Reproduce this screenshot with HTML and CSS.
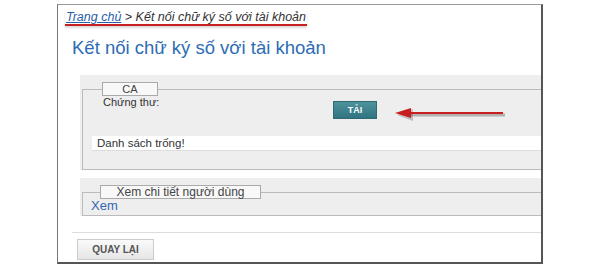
FILE: index.html
```html
<!DOCTYPE html>
<html lang="vi">
<head>
    <meta charset="UTF-8">
    <title>Kết nối chữ ký số với tài khoản</title>
    <link rel="stylesheet" href="styles.css">
</head>
<body>
    <div class="frame">
        <div class="breadcrumb">
            <span class="crumbs"><a href="#">Trang chủ</a> &gt; Kết nối chữ ký số với tài khoản</span>
        </div>
        <h1 class="title">Kết nối chữ ký số với tài khoản</h1>

        <div class="panel">
            <fieldset>
                <legend class="legend-ca"><span>CA</span></legend>
                <div class="cert-row">
                    <span class="cert-label">Chứng thư:</span>
                    <button class="btn-load">TẢI</button>
                </div>
                <div class="empty-row">Danh sách trống!</div>
            </fieldset>
        </div>

        <div class="panel panel-second">
            <fieldset>
                <legend class="legend-user"><span>Xem chi tiết người dùng</span></legend>
                <a class="view-link" href="#">Xem</a>
            </fieldset>
        </div>

        <div class="footer-bar">
            <button class="btn-back">QUAY LẠI</button>
        </div>

        <svg class="arrow" width="120" height="20" viewBox="0 0 120 20">
            <line x1="12" y1="11" x2="110" y2="11" stroke="rgba(0,0,0,0.25)" stroke-width="3"/>
            <polygon points="0,9 16,3 16,15" fill="rgba(0,0,0,0.2)" transform="translate(2,2)"/>
            <line x1="12" y1="9" x2="108" y2="9" stroke="#c81e1e" stroke-width="2"/>
            <polygon points="0,9 16,4 16,14" fill="#c81e1e"/>
        </svg>
    </div>
</body>
</html>
```

FILE: styles.css
```css
body {
    margin: 0;
    background-color: #fff;
    font-family: "Liberation Sans", Arial, sans-serif;
    color: #333;
}
.frame {
    position: relative;
    margin: 4px 0 0 57px;
    width: 483px;
    height: 257px;
    border-left: 1px solid #777;
    border-top: 1px solid #999;
    border-right: 2px solid #555;
    border-bottom: 2px solid #555;
    overflow: hidden;
}
.breadcrumb {
    padding: 5px 0 0 7px;
    height: 17px;
    font-size: 12.5px;
    font-style: italic;
    color: #333;
}
.crumbs {
    display: inline-block;
    padding: 0 1px;
    border-bottom: 2px solid #c8201e;
    line-height: 13px;
    box-shadow: 0 2px 2px rgba(0, 0, 0, 0.15);
}
.crumbs a {
    color: #2a5ea8;
    text-decoration: underline;
}
.title {
    margin: 11px 0 0 14px;
    font-size: 18.5px;
    font-weight: normal;
    color: #2d6cb4;
    line-height: 20px;
}
.panel {
    margin: 17px 0 0 22px;
    padding: 7px 0 0 2px;
    background-color: #eee;
}
.panel-second {
    margin-top: 8px;
}
fieldset {
    margin: 0;
    padding: 0 0 18px 10px;
    width: 600px;
    border: 1px solid #bbb;
    border-right: none;
}
legend {
    margin-left: 9px;
    padding: 0;
    height: 12px;
    line-height: 12px;
    border: 1px solid #aaa;
    background-color: #f8f8f8;
    color: #444;
}
legend span {
    display: block;
    text-align: center;
}
.legend-ca {
    width: 54px;
    font-size: 11px;
}
.legend-user {
    width: 159px;
    font-size: 12px;
}
.cert-row {
    display: flex;
    align-items: flex-start;
}
.cert-label {
    width: 230px;
    margin-left: 10px;
    font-size: 11px;
    line-height: 12px;
    color: #333;
}
.btn-load {
    margin-top: 5px;
    width: 44px;
    height: 18px;
    padding: 0;
    border: 1px solid #2f6a73;
    background: linear-gradient(#4e929c, #2f7480);
    color: #fff;
    font-family: "Liberation Sans", Arial, sans-serif;
    font-size: 9px;
    font-weight: bold;
}
.empty-row {
    margin: 17px 0 0 -1px;
    height: 14px;
    width: 460px;
    padding-left: 5px;
    background-color: #fff;
    border-bottom: 1px solid #ddd;
    font-size: 11.5px;
    line-height: 14px;
    color: #333;
}
.panel-second fieldset {
    padding: 0 0 2px 8px;
}
.view-link {
    display: block;
    font-size: 13px;
    line-height: 14px;
    color: #3466ad;
    text-decoration: none;
}
.footer-bar {
    margin: 16px 0 0 14px;
    padding-top: 6px;
    border-top: 1px solid #ddd;
}
.btn-back {
    margin-left: 5px;
    width: 77px;
    height: 21px;
    padding: 0;
    border: 1px solid #ccc;
    background: linear-gradient(#fafafa, #e6e6e6);
    color: #555;
    font-family: "Liberation Sans", Arial, sans-serif;
    font-size: 10px;
    font-weight: bold;
}
.arrow {
    position: absolute;
    left: 337px;
    top: 99px;
}
```
